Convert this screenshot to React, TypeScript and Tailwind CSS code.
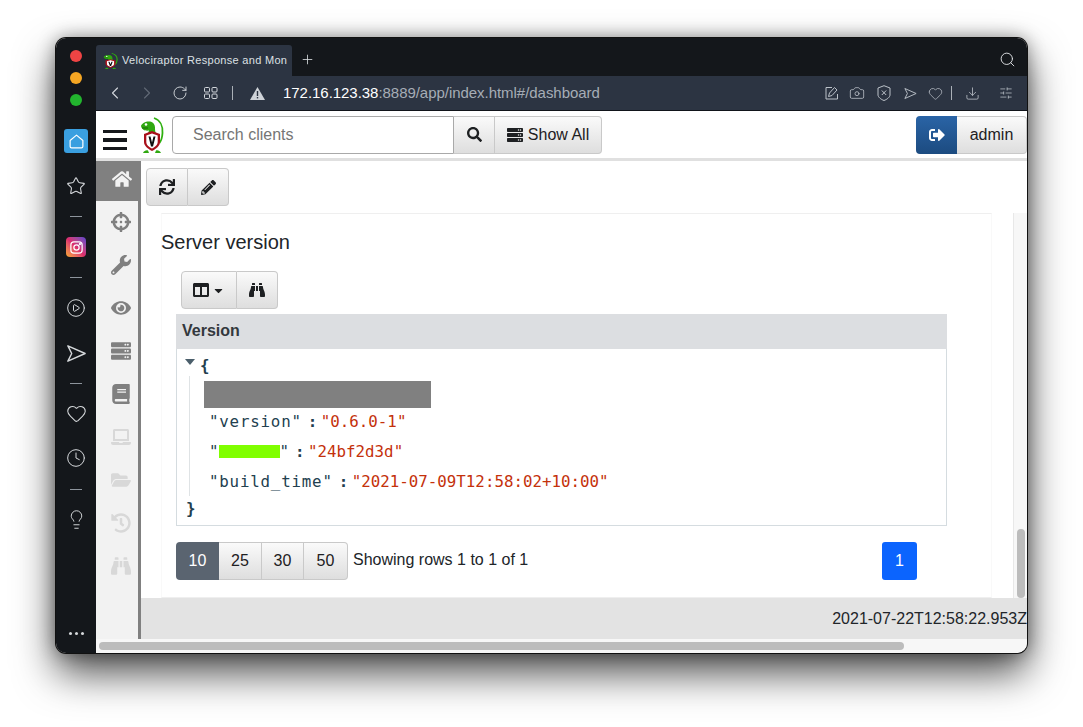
import React from 'react';
import {
  ChevronLeft,
  ChevronRight,
  RotateCw,
  Plus,
  Search,
  Star,
  CirclePlay,
  Heart,
  Clock,
  Lightbulb,
  Camera,
  Download,
  SlidersHorizontal,
} from 'lucide-react';
import {
  FaHome,
  FaCrosshairs,
  FaWrench,
  FaEye,
  FaServer,
  FaBook,
  FaLaptop,
  FaFolderOpen,
  FaHistory,
  FaBinoculars,
  FaSync,
  FaPencilAlt,
  FaColumns,
  FaSignOutAlt,
  FaSearch,
  FaCaretDown,
} from 'react-icons/fa';

const Logo = ({ className, stretch }: { className?: string; stretch?: boolean }) => (
  <svg viewBox="0 0 24 36" className={className} preserveAspectRatio={stretch ? 'none' : 'xMidYMid meet'}>
    <path d="M14 1c6 2 9 8 8.500 15-.3 5-1.500 8-3 10" fill="none" stroke="#2fb010" strokeWidth="1.800" />
    <path d="M1 9c1-3 5-5 9-4.500 3 .5 5 3 5 6 0 2 0 4 1 6H8l1-3c-3 .5-7 0-8-4.500z" fill="#2fa810" />
    <circle cx="6" cy="7.500" r="1.300" fill="#fff" />
    <path d="M2 11h6" stroke="#145c05" strokeWidth=".8" />
    <path d="M4 17l8-3 8 3v8c0 4-4 7-8 9-4-2-8-5-8-9z" fill="#a8101a" />
    <path d="M6.300 18.500l5.700-2 5.700 2v6.500c0 3-2.700 5-5.700 6.500-3-1.500-5.700-3.500-5.700-6.500z" fill="#fff" />
    <path d="M8.500 19.500h2l1.500 6 1.500-6h2L13 29.500h-2z" fill="#111" />
    <path d="M3 36c1-2 3-3 5-2.500l1 2.500zM15 36l1-2.500c2-.5 4 .5 5 2.500z" fill="#2fa810" />
  </svg>
);

const SendOutline = ({ size, className }: { size: number; className?: string }) => (
  <svg width={size} height={size} viewBox="0 0 24 24" fill="none" stroke="currentColor" strokeWidth="1.500" strokeLinejoin="round" className={className}>
    <path d="M3 4l18 8-18 8 4-8z" />
  </svg>
);

const Dash = () => <div className="w-3 h-px bg-[#8d949c]" />;

const SideRail = () => (
  <div className="w-10 h-full bg-[#14171b] flex flex-col items-center shrink-0 text-[#d5d8db]">
    <div className="w-3 h-3 rounded-full bg-[#ef4444] mt-3" />
    <div className="w-3 h-3 rounded-full bg-[#f5a623] mt-[10px]" />
    <div className="w-3 h-3 rounded-full bg-[#22b52e] mt-[10px]" />
    <div className="w-6 h-6 rounded-[3px] bg-[#3a9fe0] mt-[23px] flex items-center justify-center">
      <svg width="17" height="17" viewBox="0 0 24 24" fill="none" stroke="#fff" strokeWidth="1.700" strokeLinejoin="round">
        <path d="M3 10.500L12 3l9 7.500V19a2 2 0 0 1-2 2H5a2 2 0 0 1-2-2z" />
      </svg>
    </div>
    <Star size={20} strokeWidth={1.300} className="mt-[23px]" />
    <div className="mt-[20px]"><Dash /></div>
    <div className="mt-[20px] w-5 h-5 rounded-[4px] bg-gradient-to-tr from-[#f6a623] via-[#dc2a6e] to-[#5b3fd0] flex items-center justify-center">
      <svg width="15" height="15" viewBox="0 0 24 24" fill="none" stroke="#fff" strokeWidth="2">
        <rect x="3" y="3" width="18" height="18" rx="5" />
        <circle cx="12" cy="12" r="4.200" />
        <circle cx="17.500" cy="6.500" r=".8" fill="#fff" />
      </svg>
    </div>
    <div className="mt-[20px]"><Dash /></div>
    <CirclePlay size={20} strokeWidth={1.200} className="mt-[20px]" />
    <SendOutline size={23} className="mt-[24px]" />
    <div className="mt-[18px]"><Dash /></div>
    <Heart size={21} strokeWidth={1.200} className="mt-[19px]" />
    <Clock size={20} strokeWidth={1.200} className="mt-[24px]" />
    <div className="mt-[21px]"><Dash /></div>
    <Lightbulb size={21} strokeWidth={1.100} className="mt-[19px]" />
    <div className="mt-auto mb-[18px] flex gap-[3px]">
      <div className="w-[3px] h-[3px] rounded-full bg-[#d5d8db]" />
      <div className="w-[3px] h-[3px] rounded-full bg-[#d5d8db]" />
      <div className="w-[3px] h-[3px] rounded-full bg-[#d5d8db]" />
    </div>
  </div>
);

const BrowserChrome = () => (
  <>
    <div className="h-[38px] bg-[#14171b] flex items-end shrink-0 text-[#dde0e3]">
      <div className="w-[196px] h-[31px] bg-[#2c3442] rounded-t-[3px] flex items-center pl-[7px] gap-1 overflow-hidden">
        <Logo stretch className="w-[15px] h-[16px] shrink-0" />
        <span className="text-[11px] whitespace-nowrap tracking-[0.3px]">Velociraptor Response and Mon</span>
      </div>
      <Plus size={15} strokeWidth={1.300} className="ml-[8px] mb-[9px]" />
      <Search size={17} strokeWidth={1.300} className="ml-auto mr-[11px] mb-[8px] text-[#e3e5e8]" />
    </div>
    <div className="h-[35px] bg-[#2c3442] flex items-center shrink-0 border-b border-[#11141a] text-[#d3d7dc]">
      <ChevronLeft size={20} strokeWidth={1.300} className="ml-[9px]" />
      <ChevronRight size={20} strokeWidth={1.300} className="ml-[12px] text-[#626a76]" />
      <RotateCw size={16} strokeWidth={1.400} className="ml-[15px]" />
      <svg width="14" height="12" viewBox="0 0 14 12" fill="none" stroke="currentColor" className="ml-[16px]">
        <rect x=".5" y=".5" width="5" height="4.500" rx="1" />
        <rect x="8" y=".5" width="5" height="4.500" rx="1" />
        <rect x=".5" y="7" width="5" height="4.500" rx="1" />
        <rect x="8" y="7" width="5" height="4.500" rx="1" />
      </svg>
      <div className="w-px h-3.5 bg-[#aab0b7] ml-[14px]" />
      <svg width="15" height="13" viewBox="0 0 15 13" className="ml-[17px]">
        <path d="M7.500 0L15 13H0z" fill="#cfd3d8" />
        <rect x="6.800" y="4" width="1.400" height="5" fill="#2c3442" />
        <rect x="6.800" y="10" width="1.400" height="1.400" fill="#2c3442" />
      </svg>
      <span className="ml-[18px] text-[15px] tracking-[-0.04px] whitespace-nowrap">
        <span className="text-white">172.16.123.38</span>
        <span className="text-[#a6adb6]">:8889/app/index.html#/dashboard</span>
      </span>
      <div className="ml-auto flex items-center text-[#bcc2c9]">
        <svg width="14" height="14" viewBox="0 0 14 14" fill="none" stroke="currentColor" strokeWidth="1">
          <path d="M7 1.500H1v11.500h11.500V8M3.500 10.500l1-3.500 5-5.500 2.500 2.500-5 5.500z" />
        </svg>
        <Camera size={16} strokeWidth={1.200} className="ml-[10px]" />
        <svg width="14" height="16" viewBox="0 0 14 16" fill="none" stroke="currentColor" className="ml-[12px]">
          <path d="M1 3l6-2.300L13 3v7c0 2-3 4.500-6 5.500-3-1-6-3.500-6-5.500zM4.800 5.500l4.400 4.500M9.200 5.500l-4.400 4.500" />
        </svg>
        <SendOutline size={15} className="ml-[12px]" />
        <Heart size={15} strokeWidth={1.200} className="ml-[10px]" />
        <div className="w-px h-3.5 bg-[#aab0b7] ml-[8px]" />
        <Download size={15} strokeWidth={1.300} className="ml-[13px]" />
        <SlidersHorizontal size={14} strokeWidth={1.300} className="ml-[19px] mr-[14px]" />
      </div>
    </div>
  </>
);

const btn = 'bg-gradient-to-b from-[#fafafa] to-[#dedede] border border-[#c9c9c9] flex items-center justify-center text-[#1e2022]';

const AppHeader = () => (
  <div className="h-[47px] bg-white flex items-center shrink-0 text-[16px]">
    <div className="ml-[7px] mt-[11px] w-6 flex flex-col gap-[5px]">
      <div className="h-[3.500px] bg-[#15181c]" />
      <div className="h-[3.500px] bg-[#15181c]" />
      <div className="h-[3.500px] bg-[#15181c]" />
    </div>
    <Logo className="ml-[13px] w-[24px] h-[36px]" />
    <div className="ml-[8px] w-[282px] h-[38px] border border-[#a9a9a9] rounded-l-[4px] flex items-center pl-5 text-[#757575]">
      Search clients
    </div>
    <div className={`${btn} w-[41px] h-[38px] border-l-0`}>
      <FaSearch size={15} />
    </div>
    <div className={`${btn} w-[107px] h-[38px] border-l-0 rounded-r-[4px] gap-[5px]`}>
      <FaServer size={16} />
      <span>Show All</span>
    </div>
    <div className="ml-auto w-[41px] h-[38px] rounded-l-[4px] bg-gradient-to-b from-[#2a64a6] to-[#1c4b80] flex items-center justify-center text-white">
      <FaSignOutAlt size={16} />
    </div>
    <div className={`${btn} w-[70px] h-[38px] rounded-r-[4px] border-l-0`}>admin</div>
  </div>
);

const NAV_ICONS = [
  { Icon: FaCrosshairs, color: 'text-[#808080]' },
  { Icon: FaWrench, color: 'text-[#808080]' },
  { Icon: FaEye, color: 'text-[#808080]' },
  { Icon: FaServer, color: 'text-[#808080]' },
  { Icon: FaBook, color: 'text-[#808080]' },
  { Icon: FaLaptop, color: 'text-[#d8d8d8]' },
  { Icon: FaFolderOpen, color: 'text-[#d8d8d8]' },
  { Icon: FaHistory, color: 'text-[#d8d8d8]' },
  { Icon: FaBinoculars, color: 'text-[#d8d8d8]' },
];

const LeftNav = () => (
  <div className="w-[45px] bg-[#f2f2f2] border-r-[3px] border-[#808080] shrink-0 flex flex-col">
    <div className="h-10 bg-[#808080] flex items-center justify-center text-[#f2f2f2] mb-[-1px]">
      <FaHome size={20} className="ml-[10px] -mt-[4px]" />
    </div>
    {NAV_ICONS.map(({ Icon, color }, i) => (
      <div key={i} className={`h-[43px] flex items-center justify-center pl-[8px] ${color}`}>
        <Icon size={20} />
      </div>
    ))}
  </div>
);

const Key = ({ children }: { children: React.ReactNode }) => (
  <span className="tracking-[0.8px]">{children}</span>
);

const Sep = () => <span className="inline-block w-[19px] pl-[6px] font-bold">:</span>;

const JsonView = () => (
  <div className="font-['DejaVu_Sans_Mono',monospace] text-[15.8px] leading-[20px] text-[#23404f] relative h-[176px]">
    <div className="absolute left-[8px] top-[10px] w-0 h-0 border-x-[5px] border-x-transparent border-t-[6px] border-t-[#4b5f6b]" />
    <div className="absolute left-[23px] top-[7px] font-bold">{'{'}</div>
    <div className="absolute left-[12px] top-[27px] bottom-[29px] w-px bg-[#dfe3e5]" />
    <div className="ml-[27px] pt-[32px] flex flex-col">
      <div className="w-[227px] h-[27px] bg-[#808080]" />
      <div className="ml-[5px] mt-[4px] h-[20px] whitespace-nowrap">
        <Key>"version"</Key>
        <Sep />
        <span className="text-[#c4310b]">"0.6.0-1"</span>
      </div>
      <div className="ml-[5px] mt-[10px] h-[20px] whitespace-nowrap flex">
        <span>"</span>
        <span className="w-[61px] h-[13px] bg-[#80ff00] mt-[3px]" />
        <span>"</span>
        <Sep />
        <span className="text-[#c4310b]">"24bf2d3d"</span>
      </div>
      <div className="ml-[5px] mt-[10px] h-[20px] whitespace-nowrap">
        <Key>"build_time"</Key>
        <Sep />
        <span className="text-[#c4310b]">"2021-07-09T12:58:02+10:00"</span>
      </div>
    </div>
    <div className="absolute left-[9px] top-[150px] font-bold">{'}'}</div>
  </div>
);

const Content = () => (
  <div className="flex-1 flex min-h-0">
    <div className="flex-1 min-w-0 flex flex-col">
      <div className="h-[52px] shrink-0 flex items-start pt-[7px] pl-[5px]">
        <div className={`${btn} w-[42px] h-[38px] rounded-l-[4px]`}><FaSync size={16} /></div>
        <div className={`${btn} w-[41px] h-[38px] rounded-r-[4px] border-l-0`}><FaPencilAlt size={15} /></div>
      </div>
      <div className="ml-[20px] w-[831px] flex-1 border-x border-x-[#f9f9f9] border-y border-y-[#efefef]">
        <h2 className="ml-[-1px] mt-[15px] text-[20px] leading-[26px] text-[#212529]">Server version</h2>
        <div className="ml-[19px] mt-[16px] flex">
          <div className={`${btn} w-[56px] h-[38px] rounded-l-[4px] gap-[3px]`}>
            <FaColumns size={16} />
            <FaCaretDown size={13} />
          </div>
          <div className={`${btn} w-[41px] h-[38px] rounded-r-[4px] border-l-0`}><FaBinoculars size={16} /></div>
        </div>
        <div className="ml-[14px] mt-[5px] w-[771px]">
          <div className="h-[35px] bg-[#dcdee1] flex items-center pl-[6px] pb-[2px] font-bold text-[16px] text-[#33383d]">Version</div>
          <div className="border-x border-b border-[#d5dce0]">
            <JsonView />
          </div>
        </div>
        <div className="ml-[14px] mt-[16px] w-[741px] flex items-start text-[16px]">
          <div className="w-[43px] h-[38px] rounded-l-[4px] bg-[#5a6470] text-white flex items-center justify-center">10</div>
          <div className={`${btn} w-[43px] h-[38px] border-l-0`}>25</div>
          <div className={`${btn} w-[42px] h-[38px] border-l-0`}>30</div>
          <div className={`${btn} w-[44px] h-[38px] border-l-0 rounded-r-[4px]`}>50</div>
          <span className="ml-[5px] mt-[6px] text-[#212529]">Showing rows 1 to 1 of 1</span>
          <div className="ml-auto w-[35px] h-[38px] rounded-[3px] bg-[#0b64fe] text-white flex items-center justify-center">1</div>
        </div>
      </div>
    </div>
    <div className="w-[14px] shrink-0 flex flex-col">
      <div className="h-[52px]" />
      <div className="flex-1 bg-[#f7f7f7] border-l border-[#e8e8e8] flex flex-col justify-end items-center">
        <div className="w-[8px] h-[69px] rounded-full bg-[#bcbcbc]" />
      </div>
    </div>
  </div>
);

const App: React.FC = () => (
  <div className="w-[1083px] h-[727px] bg-white overflow-hidden pt-[38px] pl-[56px] font-['Liberation_Sans',sans-serif]">
    <div className="w-[971px] h-[615px] rounded-[10px] overflow-hidden flex ring-1 ring-[#111] shadow-[0_20px_40px_rgba(0,0,0,0.7),0_0_18px_rgba(0,0,0,0.4)]">
      <SideRail />
      <div className="flex-1 min-w-0 flex flex-col">
        <BrowserChrome />
        <AppHeader />
        <div className="h-[3px] bg-[#e0e0e0] shrink-0" />
        <div className="flex-1 flex min-h-0">
          <LeftNav />
          <div className="flex-1 min-w-0 flex flex-col">
            <Content />
            <div className="h-[41px] bg-[#e3e3e3] shrink-0 flex items-center justify-end text-[16px] text-[#212529] whitespace-nowrap">
              2021-07-22T12:58:22.953Z
            </div>
          </div>
        </div>
        <div className="h-[14px] bg-[#f7f7f7] shrink-0 flex items-center pl-[3px]">
          <div className="w-[805px] h-[8px] rounded-full bg-[#bcbcbc]" />
        </div>
      </div>
    </div>
  </div>
);

export default App;
